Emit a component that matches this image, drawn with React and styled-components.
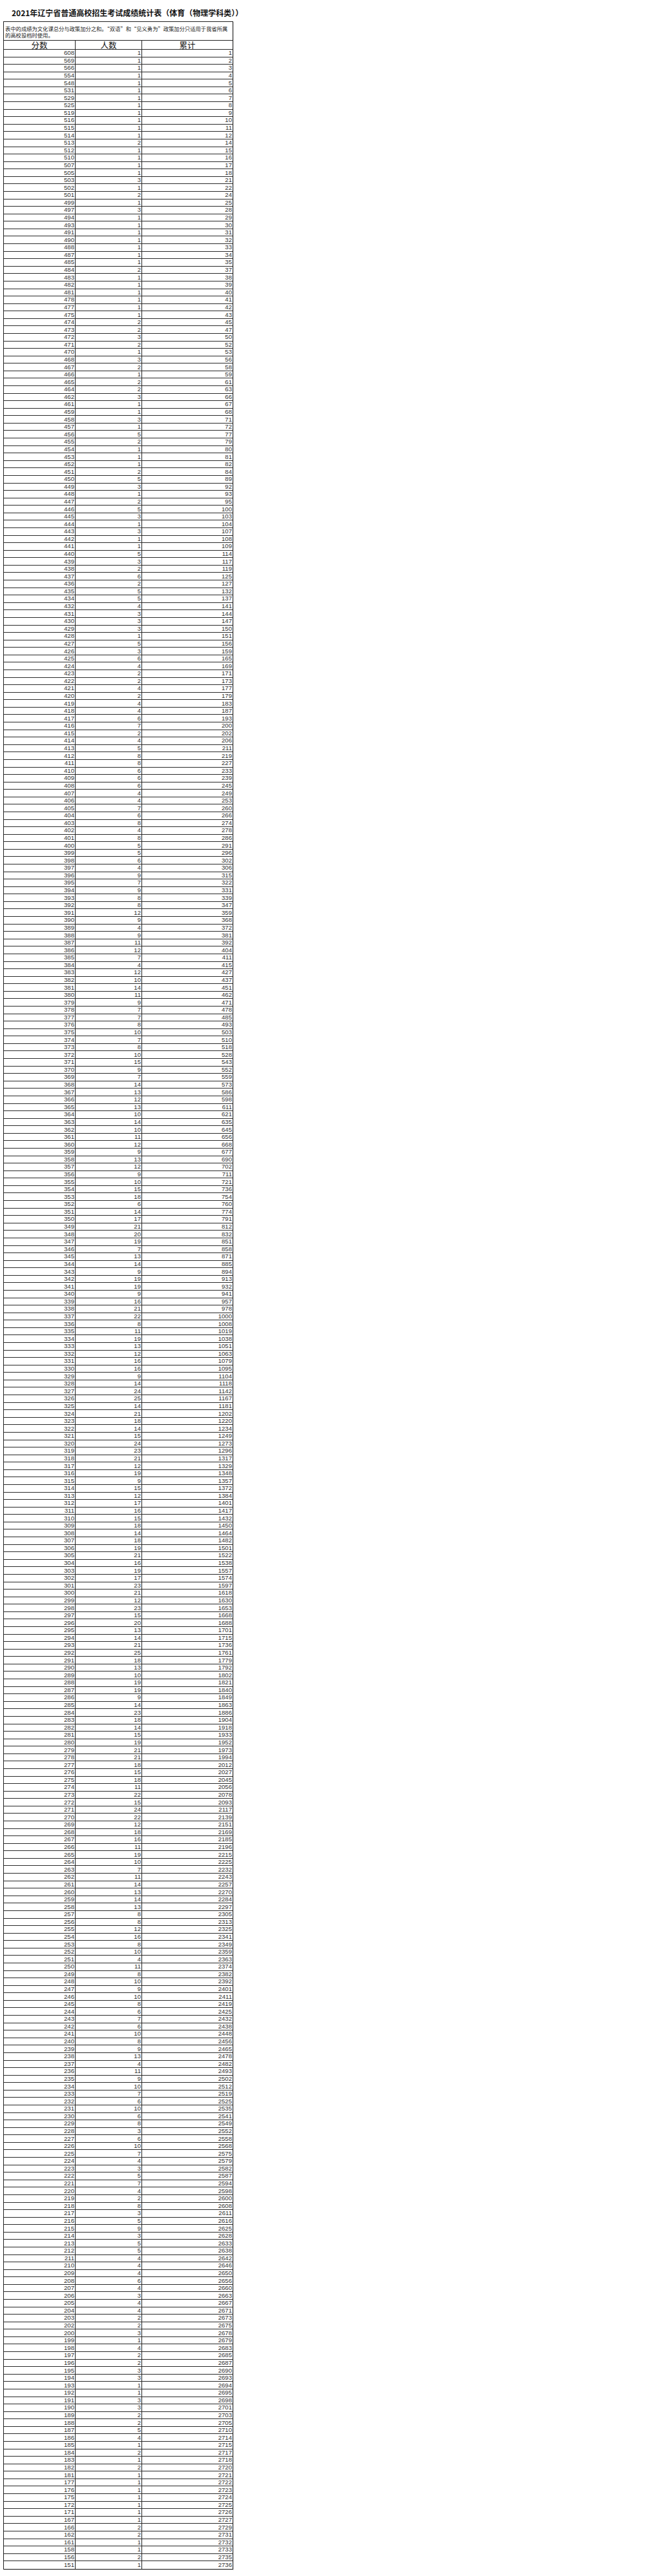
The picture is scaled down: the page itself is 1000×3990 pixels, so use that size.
import React from "react";
import styled, { createGlobalStyle } from "styled-components";

const GlobalStyle = createGlobalStyle`
  html, body {
    margin: 0;
    padding: 0;
    background: #fff;
  }
  body {
    font-family: "Liberation Sans", "Noto Sans CJK SC", sans-serif;
    color: #111;
  }
`;

const RAW =
  "608:1,569:1,566:1,554:1,548:1,531:1,529:1,525:1,519:1,516:1,515:1,514:1,513:2,512:1,510:1,507:1,505:1,503:3,502:1," +
  "501:2,499:1,497:3,494:1,493:1,491:1,490:1,488:1,487:1,485:1,484:2,483:1,482:1,481:1,478:1,477:1,475:1,474:2,473:2,472:3," +
  "471:2,470:1,468:3,467:2,466:1,465:2,464:2,462:3,461:1,459:1,458:3,457:1,456:5,455:2,454:1,453:1,452:1,451:2," +
  "450:5,449:3,448:1,447:2,446:5,445:3,444:1,443:3,442:1,441:1,440:5,439:3,438:2,437:6,436:2,435:5,434:5,432:4,431:3," +
  "430:3,429:3,428:1,427:5,426:3,425:6,424:4,423:2,422:2,421:4,420:2,419:4,418:4,417:6,416:7,415:2,414:4,413:5,412:8," +
  "411:8,410:6,409:6,408:6,407:4,406:4,405:7,404:6,403:8,402:4,401:8,400:5,399:5,398:6,397:4,396:9,395:7,394:9,393:8," +
  "392:8,391:12,390:9,389:4,388:9,387:11,386:12,385:7,384:4,383:12,382:10,381:14,380:11,379:9,378:7,377:7,376:8,375:10," +
  "374:7,373:8,372:10,371:15,370:9,369:7,368:14,367:13,366:12,365:13,364:10,363:14,362:10,361:11,360:12,359:9,358:13," +
  "357:12,356:9,355:10,354:15,353:18,352:6,351:14,350:17,349:21,348:20,347:19,346:7,345:13,344:14,343:9,342:19,341:19," +
  "340:9,339:16,338:21,337:22,336:8,335:11,334:19,333:13,332:12,331:16,330:16,329:9,328:14,327:24,326:25,325:14,324:21," +
  "323:18,322:14,321:15,320:24,319:23,318:21,317:12,316:19,315:9,314:15,313:12,312:17,311:16,310:15,309:18,308:14,307:18," +
  "306:19,305:21,304:16,303:19,302:17,301:23,300:21,299:12,298:23,297:15,296:20,295:13,294:14,293:21,292:25,291:18," +
  "290:13,289:10,288:19,287:19,286:9,285:14,284:23,283:18,282:14,281:15,280:19,279:21,278:21,277:18,276:15,275:18," +
  "274:11,273:22,272:15,271:24,270:22,269:12,268:18,267:16,266:11,265:19,264:10,263:7,262:11,261:14,260:13,259:14," +
  "258:13,257:8,256:8,255:12,254:16,253:8,252:10,251:4,250:11,249:8,248:10,247:9,246:10,245:8,244:6,243:7,242:6," +
  "241:10,240:8,239:9,238:13,237:4,236:11,235:9,234:10,233:7,232:6,231:10,230:6,229:8,228:3,227:6,226:10,225:7,224:4," +
  "223:3,222:5,221:7,220:4,219:2,218:8,217:3,216:5,215:9,214:3,213:5,212:5,211:4,210:4,209:4,208:6,207:4,206:3,205:4," +
  "204:4,203:2,202:2,200:3,199:1,198:4,197:2,196:2,195:3,194:3,193:1,192:1,191:3,190:3,189:2,188:2,187:5,186:4,185:1," +
  "184:2,183:1,182:2,181:1,177:1,176:1,175:1,172:1,171:1,167:1,166:2,162:2,161:1,158:1,156:2,151:1";

const rows = (() => {
  let total = 0;
  return RAW.split(",").map((pair) => {
    const [score, count] = pair.split(":").map(Number);
    total += count;
    return { score, count, total };
  });
})();

const Page = styled.div`
  padding: 13px 0 6px 5px;
  width: 356px;
`;

const Title = styled.h1`
  margin: 0 0 6px 13px;
  font-family: "Noto Sans CJK SC", sans-serif;
  font-size: 12px;
  line-height: 14px;
  font-weight: 700;
  color: #111;
  white-space: nowrap;
`;

const Sheet = styled.div`
  border: 1px solid #222;
  box-shadow: 1px 1px 0 #ddd;
`;

const Note = styled.p`
  margin: 0;
  height: 29px;
  box-sizing: border-box;
  padding: 5px 1px 0 2px;
  font-family: "Noto Sans CJK SC", sans-serif;
  font-size: 8.3px;
  line-height: 10px;
  color: #222;
  border-bottom: 1px solid #222;
`;

const Row = styled.div`
  display: grid;
  grid-template-columns: 111px 103px 1fr;
  height: ${(p) => (p.$head ? "14px" : "11.59px")};
  box-sizing: border-box;
  border-bottom: 1px solid #2a2a2a;
  &:last-child {
    border-bottom: none;
  }
`;

const HeadCell = styled.div`
  display: flex;
  align-items: center;
  justify-content: center;
  font-family: "Noto Sans CJK SC", sans-serif;
  font-size: 12.5px;
  line-height: 13px;
  color: #111;
  border-right: 1px solid #222;
  &:last-child {
    border-right: none;
  }
`;

const Cell = styled.div`
  display: flex;
  align-items: center;
  justify-content: flex-end;
  padding-right: 1px;
  font-family: "Liberation Sans", Arial, sans-serif;
  font-size: 9.6px;
  line-height: 10px;
  color: #333;
  border-right: 1px solid #222;
  &:last-child {
    border-right: none;
  }
`;

export default function App() {
  return (
    <>
      <GlobalStyle />
      <Page>
        <Title>2021年辽宁省普通高校招生考试成绩统计表（体育（物理学科类））</Title>
        <Sheet>
          <Note>
            表中的成绩为文化课总分与政策加分之和。“双语”和“见义勇为”政策加分只适用于我省所属的高校投档时使用。
          </Note>
          <Row $head>
            <HeadCell>分数</HeadCell>
            <HeadCell>人数</HeadCell>
            <HeadCell>累计</HeadCell>
          </Row>
          {rows.map((r) => (
            <Row key={r.score}>
              <Cell>{r.score}</Cell>
              <Cell>{r.count}</Cell>
              <Cell>{r.total}</Cell>
            </Row>
          ))}
        </Sheet>
      </Page>
    </>
  );
}
